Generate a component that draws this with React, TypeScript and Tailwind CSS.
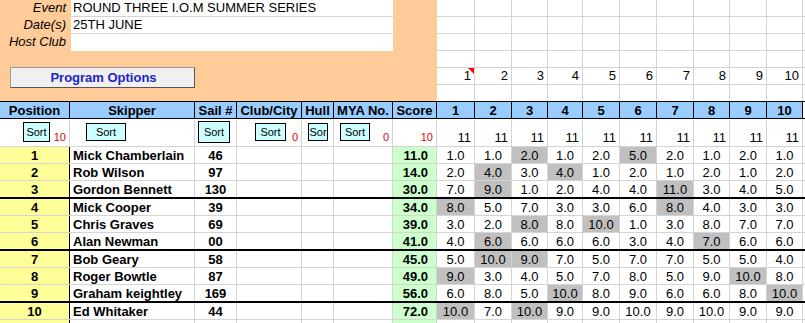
import React from 'react';

const COLS =
  'grid grid-cols-[70px_125px_42px_65px_32px_59px_44px_38px_37px_36px_35px_37px_37px_37px_36px_37px_36px_2px]';
const RACE_COLS = 'grid grid-cols-[38px_37px_36px_35px_37px_37px_37px_36px_37px_36px_2px]';

type Row = {
  pos: number;
  name: string;
  sail: string;
  score: string;
  races: string[];
  drop: number[];
  thick?: boolean;
};

const rows: Row[] = [
  { pos: 1, name: 'Mick Chamberlain', sail: '46', score: '11.0', races: ['1.0', '1.0', '2.0', '1.0', '2.0', '5.0', '2.0', '1.0', '2.0', '1.0'], drop: [2, 5] },
  { pos: 2, name: 'Rob Wilson', sail: '97', score: '14.0', races: ['2.0', '4.0', '3.0', '4.0', '1.0', '2.0', '1.0', '2.0', '1.0', '2.0'], drop: [1, 3] },
  { pos: 3, name: 'Gordon Bennett', sail: '130', score: '30.0', races: ['7.0', '9.0', '1.0', '2.0', '4.0', '4.0', '11.0', '3.0', '4.0', '5.0'], drop: [1, 6], thick: true },
  { pos: 4, name: 'Mick Cooper', sail: '39', score: '34.0', races: ['8.0', '5.0', '7.0', '3.0', '3.0', '6.0', '8.0', '4.0', '3.0', '3.0'], drop: [0, 6] },
  { pos: 5, name: 'Chris Graves', sail: '69', score: '39.0', races: ['3.0', '2.0', '8.0', '8.0', '10.0', '1.0', '3.0', '8.0', '7.0', '7.0'], drop: [2, 4] },
  { pos: 6, name: 'Alan Newman', sail: '00', score: '41.0', races: ['4.0', '6.0', '6.0', '6.0', '6.0', '3.0', '4.0', '7.0', '6.0', '6.0'], drop: [1, 7], thick: true },
  { pos: 7, name: 'Bob Geary', sail: '58', score: '45.0', races: ['5.0', '10.0', '9.0', '7.0', '5.0', '7.0', '7.0', '5.0', '5.0', '4.0'], drop: [1, 2] },
  { pos: 8, name: 'Roger Bowtle', sail: '87', score: '49.0', races: ['9.0', '3.0', '4.0', '5.0', '7.0', '8.0', '5.0', '9.0', '10.0', '8.0'], drop: [0, 8] },
  { pos: 9, name: 'Graham keightley', sail: '169', score: '56.0', races: ['6.0', '8.0', '5.0', '10.0', '8.0', '9.0', '6.0', '6.0', '8.0', '10.0'], drop: [3, 9], thick: true },
  { pos: 10, name: 'Ed Whitaker', sail: '44', score: '72.0', races: ['10.0', '7.0', '10.0', '9.0', '9.0', '10.0', '9.0', '10.0', '9.0', '9.0'], drop: [0, 2] },
];

const races = [1, 2, 3, 4, 5, 6, 7, 8, 9, 10];

function SortBtn({ label = 'Sort', cls }: { label?: string; cls: string }) {
  return (
    <div
      className={`flex items-center justify-center overflow-hidden whitespace-nowrap border border-black bg-[#ccffff] text-[11px] leading-none ${cls}`}
    >
      {label}
    </div>
  );
}

function InfoRow({ label, value, last }: { label: string; value: string; last?: boolean }) {
  return (
    <div className="flex h-[17px]">
      <div className="w-[71px] pr-[5px] text-right italic leading-[16px]">{label}</div>
      <div
        className={`w-[322px] bg-white pl-[2px] leading-[16px] ${last ? '' : 'border-b border-[#d4d4d4]'}`}
      >
        {value}
      </div>
    </div>
  );
}

export default function App() {
  return (
    <div className="h-[323px] w-[805px] overflow-hidden bg-white font-['Liberation_Sans',Arial,sans-serif] text-[13px] leading-none text-black">
      {/* top block: event details + race number strip */}
      <div className="flex h-[101px]">
        <div className="h-[101px] w-[437px] bg-[#ffcc99]">
          <InfoRow label="Event" value="ROUND THREE I.O.M SUMMER SERIES" />
          <InfoRow label="Date(s)" value="25TH JUNE" />
          <InfoRow label="Host Club" value="" last />
          <div className="ml-[10px] mt-[16px] flex h-[21px] w-[185px] items-center justify-center border border-[#9a9a9a] border-b-[#555] border-r-[#555] bg-[#f0f0f0] pl-[2px] text-[13px] font-bold text-[#2323c8]">
            Program Options
          </div>
        </div>
        <div className="flex-1">
          {[0, 1, 2, 3].map((r) => (
            <div key={r} className={`${RACE_COLS} h-[17px] border-b border-[#d4d4d4]`}>
              {races.map((n) => (
                <div key={n} className="border-r border-[#d4d4d4]" />
              ))}
              <div />
            </div>
          ))}
          <div className={`${RACE_COLS} h-[17px] border-b border-[#d4d4d4]`}>
            {races.map((n) => (
              <div key={n} className="relative flex items-center justify-end border-r border-[#d4d4d4] pr-[3px] leading-[16px]">
                {n}
                {n === 1 && (
                  <span className="absolute right-0 top-0 h-0 w-0 border-l-[6px] border-t-[6px] border-l-transparent border-t-[#ff0000]" />
                )}
              </div>
            ))}
            <div />
          </div>
          <div className={`${RACE_COLS} h-[16px]`}>
            {races.map((n) => (
              <div key={n} className="border-r border-[#d4d4d4]" />
            ))}
            <div />
          </div>
        </div>
      </div>

      {/* header */}
      <div className={`${COLS} h-[18px] border-y border-black bg-[#99ccff] text-[13px] font-bold`}>
        {['Position', 'Skipper', 'Sail #', 'Club/City', 'Hull', 'MYA No.', 'Score'].map((h) => (
          <div key={h} className="flex items-center justify-center overflow-hidden whitespace-nowrap border-r border-black">
            {h}
          </div>
        ))}
        {races.map((n) => (
          <div key={n} className="flex items-center justify-center border-r border-black">
            {n}
          </div>
        ))}
        <div className="bg-white" />
      </div>

      {/* sort row */}
      <div className={`${COLS} h-[28px] border-b border-[#d4d4d4]`}>
        <div className="flex justify-between border-r border-[#d4d4d4]">
          <SortBtn cls="ml-[23px] mt-[3px] h-[20px] w-[27px]" />
          <span className="self-end pb-[3px] pr-[3px] text-[11px] text-[#e00000]">10</span>
        </div>
        <div className="border-r border-[#d4d4d4]">
          <SortBtn cls="ml-[16px] mt-[4px] h-[18px] w-[40px]" />
        </div>
        <div className="border-r border-[#d4d4d4]">
          <SortBtn cls="ml-[3px] mt-[2px] h-[22px] w-[32px] border-[1.5px]" />
        </div>
        <div className="flex justify-between border-r border-[#d4d4d4]">
          <SortBtn cls="ml-[18px] mt-[4px] h-[18px] w-[31px]" />
          <span className="self-end pb-[3px] pr-[3px] text-[11px] text-[#e00000]">0</span>
        </div>
        <div className="border-r border-[#d4d4d4]">
          <SortBtn label="Sor" cls="ml-[6px] mt-[4px] h-[18px] w-[20px]" />
        </div>
        <div className="flex justify-between border-r border-[#d4d4d4]">
          <SortBtn cls="ml-[6px] mt-[4px] h-[18px] w-[30px]" />
          <span className="self-end pb-[3px] pr-[3px] text-[11px] text-[#e00000]">0</span>
        </div>
        <div className="flex items-end justify-end border-r border-[#d4d4d4] pb-[3px] pr-[3px]">
          <span className="text-[11px] text-[#e00000]">10</span>
        </div>
        {races.map((n) => (
          <div key={n} className="flex items-end justify-end border-r border-[#d4d4d4] pb-[2px] pr-[3px]">
            11
          </div>
        ))}
        <div />
      </div>

      {/* results */}
      {rows.map((r) => (
        <div
          key={r.pos}
          className={`${COLS} ${r.thick ? 'h-[18px] border-b-2 border-black' : 'h-[17px] border-b border-[#d4d4d4]'}`}
        >
          <div className="flex items-center justify-center border-r border-black bg-[#ffff99] font-bold">{r.pos}</div>
          <div className="flex items-center overflow-hidden whitespace-nowrap border-r border-[#d4d4d4] pl-[3px] font-bold">
            {r.name}
          </div>
          <div className="flex items-center justify-center border-r border-[#d4d4d4] font-bold">{r.sail}</div>
          <div className="border-r border-[#d4d4d4]" />
          <div className="border-r border-[#d4d4d4]" />
          <div className="border-r border-[#d4d4d4]" />
          <div className="flex items-center justify-end border-r border-[#d4d4d4] bg-[#ccffcc] pr-[8px] font-bold">
            {r.score}
          </div>
          {r.races.map((v, i) => (
            <div
              key={i}
              className={`flex items-center justify-center border-r border-[#d4d4d4] ${r.drop.includes(i) ? 'bg-[#c0c0c0]' : ''}`}
            >
              {v}
            </div>
          ))}
          <div />
        </div>
      ))}
      <div className={`${COLS} h-[6px]`}>
        <div className="border-r border-black bg-[#ffff99]" />
        {[0, 1, 2, 3, 4, 5].map((i) => (
          <div key={i} className={`border-r border-[#d4d4d4] ${i === 5 ? 'bg-[#ccffcc]' : ''}`} />
        ))}
        {races.map((n) => (
          <div key={n} className="border-r border-[#d4d4d4]" />
        ))}
        <div />
      </div>
    </div>
  );
}
